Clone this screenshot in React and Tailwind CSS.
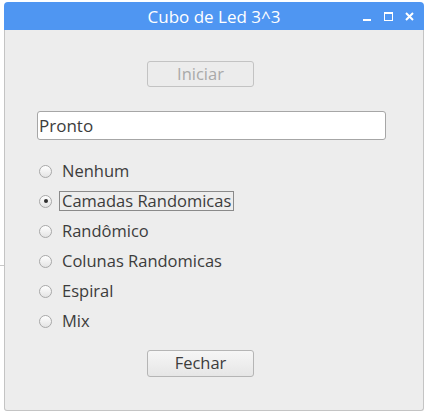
import React from "react";

const OPTIONS = ["Nenhum", "Camadas Randomicas", "Randômico", "Colunas Randomicas", "Espiral", "Mix"];

function Radio({ checked }) {
  return (
    <span className="w-[13px] h-[13px] rounded-full border border-[#a8a8a8] bg-gradient-to-b from-[#ffffff] to-[#e4e4e4] flex items-center justify-center shrink-0">
      {checked && <span className="w-[4px] h-[4px] rounded-full bg-[#303030]" />}
    </span>
  );
}

export default function App() {
  const selected = 1;
  return (
    <div className="w-[428px] h-[416px] bg-white relative overflow-hidden" style={{ fontFamily: "'Open Sans', 'Liberation Sans', sans-serif" }}>
      <div className="absolute left-0 top-[265px] w-[4px] h-[1px] bg-[#c8c8c8]" />
      <div className="absolute left-[4px] top-[2px] w-[420px] h-[409px] flex flex-col">
        <div className="h-[28px] bg-[#4f96f2] rounded-t-[4px] flex items-center justify-center relative">
          <span className="text-white text-[17px] leading-none">Cubo de Led 3^3</span>
          <div className="absolute right-[10px] top-0 h-full flex items-center gap-[12px]">
            <span className="w-[9px] h-[9px] flex items-end"><span className="w-[8px] h-[2px] bg-white" /></span>
            <span className="w-[9px] h-[9px] border border-white border-t-2" />
            <svg width="9" height="9" viewBox="0 0 9 9"><path d="M1 1L8 8M8 1L1 8" stroke="white" strokeWidth="2" /></svg>
          </div>
        </div>
        <div className="flex-1 bg-[#ededed] border-x border-b border-[#c4c4c4] rounded-b-[3px] flex flex-col items-start pt-[31px]">
          <button className="ml-[142px] w-[107px] h-[26px] rounded-[3px] border border-[#c3c3c3] bg-[#ececec] text-[#a9a9a9] text-[16.5px] leading-none">Iniciar</button>
          <div className="ml-[32px] mt-[24px] w-[349px] h-[29px] bg-white border border-[#a6a6a6] rounded-[3px] flex items-center px-[1px] text-[17px] text-[#3c3c3c]">Pronto</div>
          <div className="ml-[34px] mt-[21px] flex flex-col gap-[10px]">
            {OPTIONS.map((o, i) => (
              <div key={o} className="h-[20px] flex items-center gap-[7px]">
                <Radio checked={i === selected} />
                <span className={`text-[16.5px] text-[#3c3c3c] leading-[18px] px-[2px] ${i === selected ? "border border-[#8a8a8a]" : "border border-transparent"}`}>{o}</span>
              </div>
            ))}
          </div>
          <button className="ml-[142px] mt-[19px] w-[107px] h-[27px] rounded-[3px] border border-[#b5b5b5] bg-gradient-to-b from-[#f6f6f6] to-[#e6e6e6] text-[#3c3c3c] text-[16.5px] leading-none">Fechar</button>
        </div>
      </div>
    </div>
  );
}
